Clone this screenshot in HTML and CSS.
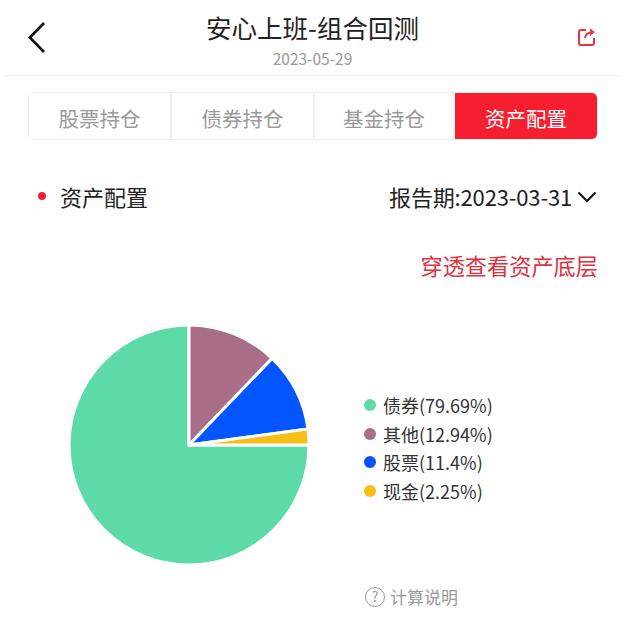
FILE: index.html
```html
<!DOCTYPE html>
<html lang="zh">
<head>
<meta charset="utf-8">
<title>安心上班-组合回测</title>
<link rel="stylesheet" href="styles.css">
</head>
<body>
<header class="nav">
  <svg class="back" viewBox="0 0 20 32" width="20" height="32"><path d="M17 2 L2.800 16.500 L17 31" fill="none" stroke="#111" stroke-width="2.600"/></svg>
  <div class="nav-text">
    <h1 class="title">安心上班-组合回测</h1>
    <div class="date">2023-05-29</div>
  </div>
  <svg class="share" viewBox="0 0 20 20" width="20" height="20"><path d="M9 3 H4 Q2 3 2 5 V16 Q2 18 4 18 H15 Q17 18 17 16 V11" fill="none" stroke="#e8363f" stroke-width="2"/><path d="M8 11 Q9 6 14 5.500" fill="none" stroke="#e8363f" stroke-width="2"/><path d="M13 1.500 L18 5 L13 9 Z" fill="#e8363f"/></svg>
</header>
<nav class="tabs">
  <div class="tab">股票持仓</div>
  <div class="tab">债券持仓</div>
  <div class="tab">基金持仓</div>
  <div class="tab active">资产配置</div>
</nav>
<section class="head">
  <div class="head-left"><span class="dot"></span><span>资产配置</span></div>
  <div class="period"><span>报告期:2023-03-31</span>
    <svg class="chev" viewBox="0 0 20 12" width="20" height="12"><path d="M1.500 1.500 L10 10 L18.500 1.500" fill="none" stroke="#111" stroke-width="2"/></svg>
  </div>
</section>
<div class="link">穿透查看资产底层</div>
<section class="chart">
  <svg class="pie" viewBox="0 0 242 242" width="242" height="242">
    <g stroke="#fff" stroke-width="3" stroke-linejoin="round">
      <path fill="#5cdba9" d="M121 121 L241 121 A120 120 0 1 1 121 1 Z"/>
      <path fill="#a96f88" d="M121 121 L121 1 A120 120 0 0 1 204.100 34.400 Z"/>
      <path fill="#0255ff" d="M121 121 L204.100 34.400 A120 120 0 0 1 240 105.100 Z"/>
      <path fill="#f7be16" d="M121 121 L240 105.100 A120 120 0 0 1 241 121 Z"/>
    </g>
  </svg>
  <ul class="legend">
    <li class="legend-item"><span class="swatch green"></span>债券(79.69%)</li>
    <li class="legend-item"><span class="swatch mauve"></span>其他(12.94%)</li>
    <li class="legend-item"><span class="swatch blue"></span>股票(11.4%)</li>
    <li class="legend-item"><span class="swatch yellow"></span>现金(2.25%)</li>
  </ul>
</section>
<footer class="note">
  <span class="help">?</span>
  <span>计算说明</span>
</footer>
</body>
</html>
```
FILE: styles.css
```css
* { box-sizing: border-box; }
html, body { margin: 0; padding: 0; }
body {
  width: 634px;
  height: 629px;
  overflow: hidden;
  background: #fff;
  color: #222;
  font-family: "Noto Sans CJK SC", "Noto Sans", sans-serif;
}
.nav {
  position: relative;
  margin: 0 12px 0 3px;
  height: 76px;
  border-bottom: 1px solid #f2f2f2;
  display: flex;
  align-items: flex-start;
  justify-content: space-between;
  padding: 21px 25px 0 24px;
}
.back { display: block; }
.nav-text {
  position: absolute;
  left: 0;
  right: 0;
  top: 8px;
  text-align: center;
}
.title {
  margin: 0;
  font-size: 25.500px;
  line-height: 37px;
  font-weight: 400;
  color: #222;
}
.date {
  font-size: 15.500px;
  line-height: 22px;
  margin-top: 2px;
  color: #999;
}
.share { margin-top: 6px; margin-left: auto; }
.tabs {
  display: grid;
  grid-template-columns: 143px 143px 140px 1fr;
  margin: 16px 36px 0 28px;
  height: 48px;
  border: 1px solid #f0f0f0;
  border-radius: 6px;
  overflow: hidden;
}
.tab {
  display: flex;
  align-items: center;
  justify-content: center;
  padding-top: 3px;
  font-size: 20.500px;
  color: #999;
  border-right: 2px solid #f0f0f0;
}
.tab.active {
  background: #f61f30;
  color: #fff;
  border-right: 0;
}
.head {
  display: flex;
  justify-content: space-between;
  align-items: center;
  margin: 36px 36px 0 38px;
  height: 40px;
  font-size: 22px;
}
.head-left { display: flex; align-items: center; }
.dot {
  width: 8px;
  height: 8px;
  border-radius: 50%;
  background: #ee2233;
  margin-right: 14px;
}
.period { display: flex; align-items: center; gap: 5px; color: #222; letter-spacing: -0.150px; }
.chev { margin: 2px 1px 0 0; }
.link {
  margin: 33px 36px 0 0;
  text-align: right;
  font-size: 22.200px;
  line-height: 32px;
  color: #e0303e;
}
.chart {
  display: flex;
  align-items: center;
  margin: 43px 0 0 68px;
}
.legend {
  list-style: none;
  margin: 6px 0 0 54px;
  padding: 0;
}
.legend-item {
  display: flex;
  align-items: center;
  height: 28.500px;
  font-size: 18px;
  color: #333;
}
.swatch {
  width: 12px;
  height: 12px;
  border-radius: 50%;
  margin-right: 7px;
}
.green { background: #5cdba9; }
.mauve { background: #a96f88; }
.blue { background: #0255ff; }
.yellow { background: #f7be16; }
.note {
  display: flex;
  align-items: center;
  gap: 5px;
  margin: 18px 0 0 365px;
  font-size: 17px;
  color: #999;
}
.help {
  width: 20px;
  height: 20px;
  border: 1.300px solid #999;
  border-radius: 50%;
  display: flex;
  align-items: center;
  justify-content: center;
  font-size: 14px;
  line-height: 17px;
}
```
